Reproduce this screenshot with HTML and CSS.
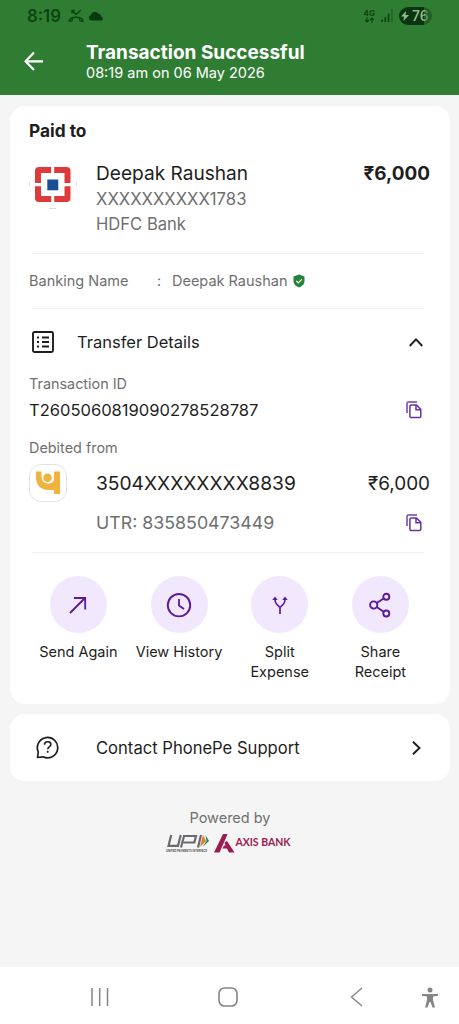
FILE: index.html
```html
<!DOCTYPE html>
<html lang="en">
<head>
<meta charset="utf-8">
<title>Transaction Successful</title>
<link rel="stylesheet" href="styles.css">
</head>
<body>
<div class="screen">
  <header class="header">
    <div class="status">
      <span class="clock">8:19</span>
      <svg class="missed" width="16" height="14" viewBox="0 0 16 14"><path d="M1 12.300c-.5-5.500 14.500-5.500 14 0l-3-.6-.4-2M1 12.300l3-.6.4-2" fill="none" stroke="#0b4312" stroke-width="1.500"/><path d="M4 1.500l4 4L13 1M4 4.500v-3h3" fill="none" stroke="#0b4312" stroke-width="1.300"/></svg>
      <svg class="cloud" width="16" height="10" viewBox="0 0 16 10"><path d="M3 9.500a2.800 2.800 0 0 1 0-5.400A4 4 0 0 1 10.300 2.500 3.300 3.300 0 0 1 13 5.500a2.100 2.100 0 0 1 .5 4z" fill="#073a0d"/></svg>
      <span class="net"><b>4G</b><svg width="11" height="6" viewBox="0 0 11 6"><path d="M3 0v5M1 3l2 2 2-2M8 6V1M6 3l2-2 2 2" fill="none" stroke="#0b4312" stroke-width="1.100"/></svg></span>
      <svg class="signal" width="12" height="13" viewBox="0 0 12 13"><path d="M1 10.500V13M4.300 8V13M7.600 4.500V13" stroke="#0b4312" stroke-width="1.600"/><path d="M10.900 0V13" stroke="#1f6527" stroke-width="1.500"/></svg>
      <span class="battery"><svg width="8" height="10" viewBox="0 0 8 10"><path d="M5 0 0 5.500h3L2.500 10 8 4H4.600z" fill="#8fba8c"/></svg><span class="level">76</span></span>
    </div>
    <div class="titlebar">
      <svg class="back" width="20" height="20" viewBox="0 0 20 20"><path d="M19 10.300H2M10 1.500 1.500 10.300 10 19" fill="none" stroke="#fff" stroke-width="2.200" stroke-linejoin="round"/></svg>
      <div><h1 class="title">Transaction Successful</h1><p class="date">08:19 am on 06 May 2026</p></div>
    </div>
  </header>

  <main class="content">
    <section class="card receipt">
      <h2 class="paid">Paid to</h2>
      <div class="payee">
        <svg class="hdfc" width="48" height="48" viewBox="0 0 48 48"><path d="M6 10a4 4 0 0 1 4-4h27.500a4 4 0 0 1 4 4v27a4 4 0 0 1-4 4H10a4 4 0 0 1-4-4z" fill="#df3a3b"/><path d="M12 12h23.500v23H12z" fill="#fff"/><path d="M22.200 5h3v37h-3zM5 22h38v3.200H5z" fill="#fff"/><path d="M18.300 18.500h11v10.800h-11z" fill="#1a4f95"/><path d="M.5 21v4M47.500 21v4M20 47.500h7" stroke="#dcdce4" stroke-width="1"/></svg>
        <div><div class="name">Deepak Raushan</div><div class="acct">XXXXXXXXXX1783</div><div class="bank">HDFC Bank</div></div>
        <div class="amount bold">₹6,000</div>
      </div>
      <hr class="rule">
      <div class="banking"><span class="blabel">Banking Name</span><span class="colon">:</span><span class="bname">Deepak Raushan</span>
        <svg width="12" height="14" viewBox="0 0 12 14"><path d="M6 .5 11.500 2.500V7c0 3-2 5.200-5.500 6.500C2.500 12.200.5 10 .5 7V2.500z" fill="#27813a"/><path d="m3.300 6.900 2 1.900 3.500-3.500" fill="none" stroke="#fff" stroke-width="1.200"/></svg>
      </div>
      <hr class="rule">
      <div class="transfer">
        <svg width="22" height="22" viewBox="0 0 22 22"><rect x="1" y="1" width="20" height="20" rx="1.500" fill="none" stroke="#1e1e1e" stroke-width="1.900"/><path d="M5 6.500h2M5 11h2M5 15.500h2M10 6.500h7M10 11h7M10 15.500h7" stroke="#1e1e1e" stroke-width="1.900"/></svg>
        <span class="tlabel">Transfer Details</span>
        <svg class="end" width="14" height="9" viewBox="0 0 14 9"><path d="M.7 8 7 1.400 13.300 8" fill="none" stroke="#1e1e1e" stroke-width="1.900"/></svg>
      </div>
      <div class="caption">Transaction ID</div>
      <div class="txn"><span>T2605060819090278528787</span>
        <svg width="16" height="18" viewBox="0 0 16 18"><path d="M1 12V2.500A1.500 1.500 0 0 1 2.500 1H11" fill="none" stroke="#7142af" stroke-width="1.500"/><path d="M5.200 4h5.300l4.300 4.400v6.800a1.300 1.300 0 0 1-1.300 1.300H5.200A1.300 1.300 0 0 1 3.900 15.200V5.300A1.300 1.300 0 0 1 5.200 4zM10 4v4.700h4.700" fill="none" stroke="#64369f" stroke-width="1.500"/></svg>
      </div>
      <div class="caption debit">Debited from</div>
      <div class="source">
        <div class="pnb"><svg width="24" height="24" viewBox="0 0 24 24"><path d="M0 .5h5.500v4c0 5 2.500 8 6.500 8s6-2 6-5v-7h6v22.500h-6v-4h-6C5 19 0 14 0 7z" fill="#f0b340"/><circle cx="11.500" cy="6.800" r="4.300" fill="#f0b340"/></svg></div>
        <span>3504XXXXXXXX8839</span>
        <div class="amount lower">₹6,000</div>
      </div>
      <div class="utr"><span>UTR: 835850473449</span>
        <svg width="16" height="18" viewBox="0 0 16 18"><path d="M1 12V2.500A1.500 1.500 0 0 1 2.500 1H11" fill="none" stroke="#7142af" stroke-width="1.500"/><path d="M5.200 4h5.300l4.300 4.400v6.800a1.300 1.300 0 0 1-1.300 1.300H5.200A1.300 1.300 0 0 1 3.900 15.200V5.300A1.300 1.300 0 0 1 5.200 4zM10 4v4.700h4.700" fill="none" stroke="#64369f" stroke-width="1.500"/></svg>
      </div>
      <hr class="rule last">
      <div class="actions">
        <div class="action"><div class="disc"><svg width="26" height="26" viewBox="0 0 26 26"><path d="M5 21 20 6M9 6h11.200v11.500" fill="none" stroke="#5b1a9c" stroke-width="1.800"/></svg></div><span>Send Again</span></div>
        <div class="action"><div class="disc"><svg width="26" height="26" viewBox="0 0 26 26"><circle cx="13" cy="13.200" r="11.200" fill="none" stroke="#5b1a9c" stroke-width="1.900"/><path d="M13 7v6.500l5 3.500" fill="none" stroke="#5b1a9c" stroke-width="1.800"/></svg></div><span>View History</span></div>
        <div class="action"><div class="disc"><svg width="26" height="26" viewBox="0 0 26 26"><path d="M13 22v-6.500L9.500 12Q8 10.500 8 6.500M13 15.500l3.500-3.500Q18 10.500 18 6.500" fill="none" stroke="#5b1a9c" stroke-width="1.700"/><path d="M5.300 8 8 4.500 10.700 8zM15.300 8 18 4.500 20.700 8z" fill="#5b1a9c"/></svg></div><span>Split<br>Expense</span></div>
        <div class="action"><div class="disc"><svg width="26" height="26" viewBox="0 0 26 26"><g fill="none" stroke="#5b1a9c" stroke-width="1.900"><circle cx="6.700" cy="13" r="3.600"/><circle cx="19.300" cy="4.800" r="3"/><circle cx="19.300" cy="21.500" r="3"/><path d="m9.700 11 7-4.500M9.700 15l7 4.800"/></g></svg></div><span>Share<br>Receipt</span></div>
      </div>
    </section>

    <section class="card support">
      <svg width="23" height="23" viewBox="0 0 23 23"><path d="M1.500 21.500l.8-5.500A10.200 10.200 0 1 1 7 20.800z" fill="none" stroke="#1e1e1e" stroke-width="1.700" stroke-linejoin="round"/><path d="M8.500 8.700c0-4 6.400-3.700 6.400-.3 0 2.500-3.200 2.300-3.200 4.800M11.700 14.700v2" fill="none" stroke="#1e1e1e" stroke-width="1.600"/></svg>
      <span class="slabel">Contact PhonePe Support</span>
      <svg class="end" width="9" height="14" viewBox="0 0 9 14"><path d="M1 .7 7.500 7 1 13.300" fill="none" stroke="#1e1e1e" stroke-width="1.900"/></svg>
    </section>

    <footer class="powered">
      <span class="pby">Powered by</span>
      <div class="brands">
        <svg class="upi" width="44" height="19" viewBox="0 0 44 19"><g fill="none" stroke="#6b6b6e" stroke-width="2.200"><path d="M5.200 1 2.500 11.800h9.500L14.700 1"/><path d="M15 13.500 18 2h12l-1.700 6.500H17.500M35 1 32 13.500"/></g><path d="m37 1 3 6-6 6z" fill="#df7b35"/><path d="m39.500 1 3.500 6-6.500 6 4-6z" fill="#26834c"/><text x="0" y="17.500" class="tiny" textLength="41" lengthAdjust="spacingAndGlyphs">UNIFIED PAYMENTS INTERFACE</text></svg>
        <svg width="21" height="19" viewBox="0 0 21 19"><path d="M9 0h4.500L11.500 5 5.500 18.500H0zM10.500 8.500 13 7l7.500 11.500H15l-2-4H8.500l1.500-3h1.500z" fill="#9b1c50"/></svg>
        <span class="axis">AXIS BANK</span>
      </div>
    </footer>
  </main>

  <nav class="nav">
    <svg width="18" height="20" viewBox="0 0 18 20"><path d="M1 1v18M8.700 1v18M16.500 1v18" stroke="#858585" stroke-width="1.500"/></svg>
    <svg class="home" width="20" height="20" viewBox="0 0 20 20"><rect x="1" y="1" width="18" height="18" rx="5.500" fill="none" stroke="#858585" stroke-width="1.600"/></svg>
    <svg class="prev" width="13" height="20" viewBox="0 0 13 20"><path d="M12 1 1.500 10 12 19" fill="none" stroke="#858585" stroke-width="1.400"/></svg>
    <svg class="access" width="16" height="21" viewBox="0 0 16 21"><circle cx="8" cy="3" r="2.500" fill="#858585"/><path d="M0 7h16v1.800l-5 .7V13l2 7.500h-2.500L8.500 15h-1L5.500 20.500H3L5 13V9.500L0 8.800z" fill="#858585"/></svg>
  </nav>
</div>
</body>
</html>
```
FILE: styles.css
```css
* { box-sizing: border-box; }
body { margin: 0; font-family: Inter, "Noto Sans", sans-serif; color: #1e1e1e; background: #f5f5f5; }
h1, h2, p { margin: 0; }
svg { display: block; flex: none; }
span { white-space: nowrap; }
.screen { width: 459px; height: 1024px; display: flex; flex-direction: column; overflow: hidden; }
.header { height: 95px; background: #2f7d33; flex: none; }
.status { height: 31px; display: flex; align-items: center; padding: 0 27px; color: #0b4312; }
.clock { font-size: 16.800px; font-weight: 600; }
.missed { margin-left: 7px; }
.cloud { margin-left: 4px; }
.net { margin-left: auto; display: flex; flex-direction: column; align-items: center; font-size: 8px; line-height: 8px; }
.signal { margin: 0 6px; }
.battery { width: 33px; height: 18px; border-radius: 9px; background: linear-gradient(90deg, #0b3510 76%, #235f27 76%); display: flex; align-items: center; padding-left: 2px; gap: 3px; }
.level { font-size: 14px; font-weight: 600; background: linear-gradient(90deg, #8fba8c 75%, #5a9259 75%); background-clip: text; color: transparent; }
.titlebar { display: flex; padding: 11px 0 0 24px; color: #fff; }
.back { margin: 9px 42px 0 0; }
.title { font-size: 19px; line-height: 21px; font-weight: 700; }
.date { font-size: 14.500px; line-height: 19px; }
.content { flex: 1; padding: 11px 9px 0 10px; }
.card { background: #fff; border-radius: 15px; }
.receipt { height: 598px; padding: 0 20px 0 19px; }
.paid { font-size: 17.300px; line-height: 50px; font-weight: 700; }
.payee { display: flex; height: 97px; padding-top: 4px; }
.hdfc { margin: 1px 19px 0 0; }
.name { font-size: 19.100px; line-height: 26px; }
.acct { font-size: 16.700px; line-height: 26px; color: #6f6f6f; }
.bank { font-size: 16.600px; line-height: 24px; color: #6f6f6f; }
.amount { margin-left: auto; font-size: 18.900px; line-height: 27px; }
.bold { font-weight: 700; }
.lower { padding-top: 1px; }
.rule { height: 1px; border: 0; margin: 0 6px 0 3px; background: #f0f0f0; }
.banking { height: 54px; display: flex; align-items: center; padding-bottom: 1px; font-size: 14.500px; color: #6f6f6f; }
.blabel { width: 128px; }
.colon { width: 15px; }
.bname { margin-right: 5.500px; }
.transfer { height: 66px; display: flex; align-items: center; padding: 0 7px 0 3px; font-size: 16.500px; }
.tlabel { margin-left: 23px; }
.end { margin-left: auto; }
.caption { font-size: 14.400px; line-height: 18px; color: #6f6f6f; }
.txn { height: 34px; display: flex; align-items: center; justify-content: space-between; padding-right: 8px; font-size: 16.550px; }
.debit { line-height: 24px; margin-top: 9px; }
.source { margin-top: 4px; height: 38px; display: flex; align-items: center; font-size: 19.200px; }
.pnb { width: 38px; height: 38px; margin-right: 29px; border: 1px solid #e2e2e8; border-radius: 12px; display: grid; place-items: center; }
.utr { height: 42px; display: flex; align-items: center; justify-content: space-between; padding: 0 8px 1px 67px; font-size: 17.800px; color: #6f6f6f; }
.last { margin-top: 8px; }
.actions { display: grid; grid-template-columns: repeat(4, 100.700px); margin-left: -1px; padding-top: 23px; }
.action { display: flex; flex-direction: column; align-items: center; gap: 9px; text-align: center; font-size: 14.500px; line-height: 20px; }
.disc { width: 57px; height: 57px; border-radius: 50%; background: #f1e8fd; display: grid; place-items: center; }
.support { margin-top: 10px; height: 67px; display: flex; align-items: center; padding: 0 29px 0 26px; font-size: 16.600px; }
.slabel { margin-left: 37px; }
.powered { display: flex; flex-direction: column; align-items: center; padding-top: 27px; }
.pby { font-size: 14.500px; line-height: 20px; color: #6f6f6f; }
.brands { display: flex; align-items: center; margin: 6px 3px 0 0; }
.upi { margin-right: 4px; overflow: visible; }
.tiny { font: 700 3.500px Inter, sans-serif; fill: #555; }
.axis { font: 700 10.500px/14px Lato, sans-serif; color: #9b1c50; margin-bottom: 3px; }
.nav { height: 57px; flex: none; background: #fff; display: flex; align-items: center; padding: 2px 0 0 91px; }
.home { margin-left: 109px; }
.prev { margin-left: 112px; }
.access { margin: 2px 0 0 59px; }
```
